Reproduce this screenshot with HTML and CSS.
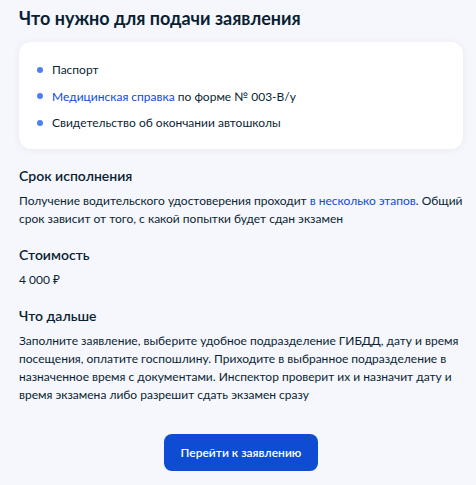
FILE: index.html
```html
<!DOCTYPE html>
<html lang="ru">
<head>
<meta charset="utf-8">
<link rel="stylesheet" href="styles.css">
</head>
<body>
<main class="page">
  <h2 class="title">Что нужно для подачи заявления</h2>
  <div class="card">
    <ul class="docs">
      <li>Паспорт</li>
      <li><a class="link" href="#">Медицинская справка</a> по форме № 003-В/у</li>
      <li>Свидетельство об окончании автошколы</li>
    </ul>
  </div>
  <section class="block">
    <h3 class="subtitle">Срок исполнения</h3>
    <p class="text">Получение водительского удостоверения проходит <a class="link" href="#">в несколько этапов</a>. Общий срок зависит от того, с какой попытки будет сдан экзамен</p>
  </section>
  <section class="block">
    <h3 class="subtitle">Стоимость</h3>
    <p class="text">4 000 ₽</p>
  </section>
  <section class="block">
    <h3 class="subtitle">Что дальше</h3>
    <p class="text">Заполните заявление, выберите удобное подразделение ГИБДД, дату и время посещения, оплатите госпошлину. Приходите в выбранное подразделение в назначенное время с документами. Инспектор проверит их и назначит дату и время экзамена либо разрешит сдать экзамен сразу</p>
  </section>
  <div class="actions">
    <button class="btn" type="button">Перейти к заявлению</button>
  </div>
</main>
</body>
</html>
```

FILE: styles.css
```css
* { box-sizing: border-box; }
html, body { margin: 0; padding: 0; }
body {
  background: #f5f7fc;
  font-family: Lato, "Noto Sans", sans-serif;
  color: #0b1f33;
  width: 476px;
  height: 485px;
  overflow: hidden;
}
.page {
  padding: 6px 13px 0 19px;
}
.title {
  margin: 0;
  font-size: 18px;
  line-height: 24px;
  font-weight: 700;
}
.card {
  margin-top: 12px;
  background: #fff;
  border-radius: 12px;
  box-shadow: 0 1px 8px rgba(11, 31, 51, 0.06);
  padding: 18px 18px 16px;
}
.docs {
  list-style: none;
  margin: 0;
  padding: 0;
  display: flex;
  flex-direction: column;
  gap: 6.5px;
}
.docs li {
  font-size: 12px;
  line-height: 20px;
}
.docs li::before {
  content: "";
  display: inline-block;
  vertical-align: middle;
  width: 6px;
  height: 6px;
  border-radius: 50%;
  background: #4f7ff0;
  margin: -2px 9px 0 0;
}
.link {
  color: #0d4cd3;
  text-decoration: none;
}
.block {
  margin-top: 17px;
}
.subtitle {
  margin: 0 0 6px;
  font-size: 14px;
  line-height: 20px;
  font-weight: 600;
}
.text {
  margin: 0;
  font-size: 12px;
  line-height: 18px;
}
.actions {
  display: flex;
  justify-content: center;
  margin-top: 30px;
}
.btn {
  width: 154px;
  height: 37px;
  border: 0;
  border-radius: 8px;
  background: #0d4cd3;
  color: #fff;
  font-family: inherit;
  font-size: 12px;
  font-weight: 600;
}
```
